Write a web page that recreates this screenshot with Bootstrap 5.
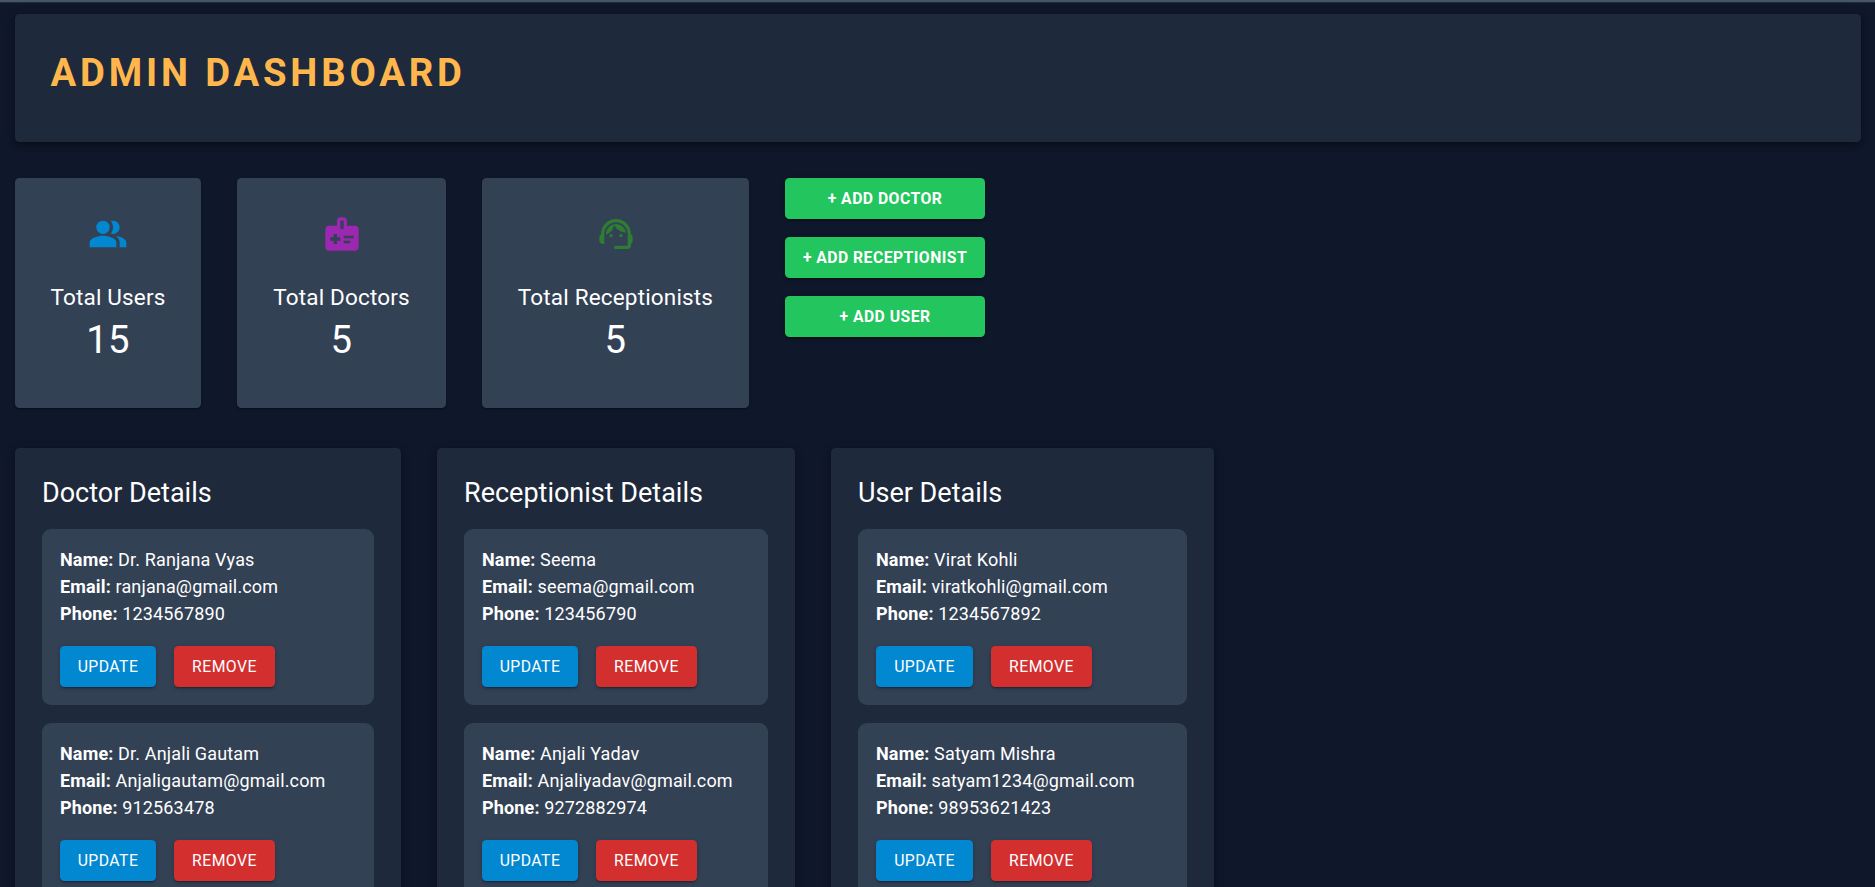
<!DOCTYPE html>
<html lang="en">
<head>
<meta charset="utf-8">
<meta name="viewport" content="width=device-width, initial-scale=1">
<title>Admin Dashboard</title>
<link href="https://cdn.jsdelivr.net/npm/bootstrap@5.3.0/dist/css/bootstrap.min.css" rel="stylesheet">
<style>
  html { font-size: 18px; }
  body { background: #0f172a; color: #fff; font-family: Roboto, sans-serif; height: 887px; overflow: hidden; }
  .top-strip { height: 2px; background: #475569; box-shadow: 0 1px 1px rgba(71,85,105,.35); }
  .page-wrap { padding: 12px 14px 0 15px; }
  .hero { background: #1e293b; border-radius: 4.5px; height: 128px; padding: 36px 35.5px; box-shadow: 0 2px 4.5px -1px rgba(0,0,0,.2), 0 4.5px 5.6px rgba(0,0,0,.14), 0 1px 11px rgba(0,0,0,.12); }
  .hero h1 { color: #ffb74d; font-size: 38.25px; line-height: 47.25px; font-weight: 700; letter-spacing: .1em; margin: 0; }
  .gap-36 { gap: 36px; }
  .stats { margin-top: 36px; }
  .stat { background: #334155; height: 230px; padding: 36px 0; border-radius: 4.5px; box-shadow: 0 2px 1px -1px rgba(0,0,0,.2), 0 1px 1px rgba(0,0,0,.14), 0 1px 3px rgba(0,0,0,.12); }
  .stat svg { width: 40px; height: 40px; margin-bottom: 25px; }
  .stat h2 { font-size: 22.5px; line-height: 36px; font-weight: 400; letter-spacing: .0075em; margin: 0 0 1.5px; }
  .stat p { font-size: 38.25px; line-height: 47.25px; letter-spacing: .00735em; margin: 0; }
  .w-users { width: 186px; } .w-doctors { width: 209px; } .w-recep { width: 267px; }
  .actions { width: 200px; gap: 18px; }
  .btn { --bs-btn-padding-x: 0; --bs-btn-padding-y: 0; height: 41px; line-height: 41px; font-size: 15.75px; font-weight: 400; letter-spacing: .02857em; border: 0; border-radius: 4.5px; color: #fff; text-transform: uppercase; box-shadow: 0 3px 1px -2px rgba(0,0,0,.2), 0 2px 2px rgba(0,0,0,.14), 0 1px 5px rgba(0,0,0,.12); }
  .btn-create { background: #22c55e; font-weight: 700; }
  .btn-update { background: #0288d1; width: 96px; }
  .btn-remove { background: #d32f2f; width: 101px; }
  .p-users .btn-update { width: 97px; }
  .panels { margin-top: 40px; }
  .panel { background: #1e293b; padding: 27px; border-radius: 4.5px; box-shadow: 0 2px 4.5px -1px rgba(0,0,0,.2), 0 4.5px 5.6px rgba(0,0,0,.14), 0 1px 11px rgba(0,0,0,.12); }
  .panel h2 { font-size: 27px; line-height: 36px; font-weight: 400; margin: 0 0 18px; }
  .p-doctors { width: 386px; } .p-recep { width: 358px; } .p-users { width: 383px; }
  .person { background: #334155; height: 176px; padding: 17px 18px 18px; border-radius: 9px; margin-bottom: 18px; }
  .person p { font-size: 18px; line-height: 27px; letter-spacing: .0085em; margin: 0; white-space: nowrap; }
  .person .tools { gap: 18px; margin-top: 19px; }
</style>
</head>
<body>
<div class="top-strip"></div>
<main class="page-wrap">
  <header class="hero"><h1>ADMIN DASHBOARD</h1></header>

  <section class="stats d-flex align-items-start gap-36">
    <div class="stat w-users d-flex flex-column align-items-center">
      <svg viewBox="0 0 24 24" fill="#0288d1"><path d="M16.67 13.13C18.04 14.06 19 15.32 19 17v3h4v-3c0-2.18-3.57-3.47-6.33-3.87z"/><circle cx="9" cy="8" r="4"/><path d="M15 12c2.21 0 4-1.79 4-4s-1.79-4-4-4c-.47 0-.91.1-1.33.24C14.5 5.27 15 6.58 15 8s-.5 2.73-1.33 3.76c.42.14.86.24 1.33.24zM9 13c-2.67 0-8 1.34-8 4v3h16v-3c0-2.66-5.33-4-8-4z"/></svg>
      <h2>Total Users</h2><p>15</p>
    </div>
    <div class="stat w-doctors d-flex flex-column align-items-center">
      <svg viewBox="0 0 24 24" fill="#9c27b0"><path d="M20 7h-5V4c0-1.1-.9-2-2-2h-2c-1.1 0-2 .9-2 2v3H4c-1.1 0-2 .9-2 2v11c0 1.1.9 2 2 2h16c1.1 0 2-.9 2-2V9c0-1.1-.9-2-2-2zm-9-3h2v5h-2V4zm0 12H9v2H7v-2H5v-2h2v-2h2v2h2v2zm2-1.5V13h6v1.5h-6zm0 3V16h4v1.5h-4z"/></svg>
      <h2>Total Doctors</h2><p>5</p>
    </div>
    <div class="stat w-recep d-flex flex-column align-items-center">
      <svg viewBox="0 0 24 24" fill="#2e7d32"><path d="M21 12.22C21 6.73 16.74 3 12 3c-4.69 0-9 3.65-9 9.28-.6.34-1 .98-1 1.72v2c0 1.1.9 2 2 2h1v-6.1c0-3.87 3.13-7 7-7s7 3.13 7 7V19h-8v2h8c1.1 0 2-.9 2-2v-1.22c.59-.31 1-.92 1-1.64v-2.3c0-.7-.41-1.31-1-1.62z"/><circle cx="9" cy="13" r="1"/><circle cx="15" cy="13" r="1"/><path d="M18 11.03C17.52 8.18 15.04 6 12.05 6c-3.03 0-6.29 2.51-6.03 6.45 2.47-1.01 4.33-3.21 4.86-5.89 1.31 2.63 4 4.44 7.12 4.47z"/></svg>
      <h2>Total Receptionists</h2><p>5</p>
    </div>
    <div class="actions d-flex flex-column">
      <button class="btn btn-create" type="button">+ Add Doctor</button>
      <button class="btn btn-create" type="button">+ Add Receptionist</button>
      <button class="btn btn-create" type="button">+ Add User</button>
    </div>
  </section>

  <section class="panels d-flex align-items-start gap-36">
    <div class="panel p-doctors">
      <h2>Doctor Details</h2>
      <div class="person">
        <p><strong>Name:</strong> Dr. Ranjana Vyas</p><p><strong>Email:</strong> ranjana@gmail.com</p><p><strong>Phone:</strong> 1234567890</p>
        <div class="tools d-flex"><button class="btn btn-update" type="button">Update</button><button class="btn btn-remove" type="button">Remove</button></div>
      </div>
      <div class="person">
        <p><strong>Name:</strong> Dr. Anjali Gautam</p><p><strong>Email:</strong> Anjaligautam@gmail.com</p><p><strong>Phone:</strong> 912563478</p>
        <div class="tools d-flex"><button class="btn btn-update" type="button">Update</button><button class="btn btn-remove" type="button">Remove</button></div>
      </div>
    </div>
    <div class="panel p-recep">
      <h2>Receptionist Details</h2>
      <div class="person">
        <p><strong>Name:</strong> Seema</p><p><strong>Email:</strong> seema@gmail.com</p><p><strong>Phone:</strong> 123456790</p>
        <div class="tools d-flex"><button class="btn btn-update" type="button">Update</button><button class="btn btn-remove" type="button">Remove</button></div>
      </div>
      <div class="person">
        <p><strong>Name:</strong> Anjali Yadav</p><p><strong>Email:</strong> Anjaliyadav@gmail.com</p><p><strong>Phone:</strong> 9272882974</p>
        <div class="tools d-flex"><button class="btn btn-update" type="button">Update</button><button class="btn btn-remove" type="button">Remove</button></div>
      </div>
    </div>
    <div class="panel p-users">
      <h2>User Details</h2>
      <div class="person">
        <p><strong>Name:</strong> Virat Kohli</p><p><strong>Email:</strong> viratkohli@gmail.com</p><p><strong>Phone:</strong> 1234567892</p>
        <div class="tools d-flex"><button class="btn btn-update" type="button">Update</button><button class="btn btn-remove" type="button">Remove</button></div>
      </div>
      <div class="person">
        <p><strong>Name:</strong> Satyam Mishra</p><p><strong>Email:</strong> satyam1234@gmail.com</p><p><strong>Phone:</strong> 98953621423</p>
        <div class="tools d-flex"><button class="btn btn-update" type="button">Update</button><button class="btn btn-remove" type="button">Remove</button></div>
      </div>
    </div>
  </section>
</main>
<script src="https://cdn.jsdelivr.net/npm/bootstrap@5.3.0/dist/js/bootstrap.bundle.min.js"></script>
</body>
</html>
